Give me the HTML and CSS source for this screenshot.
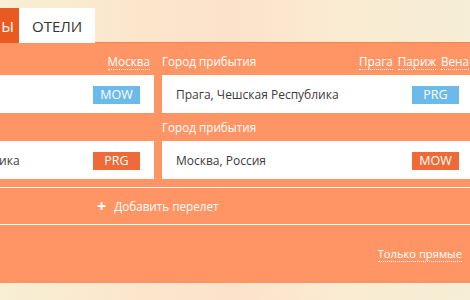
FILE: index.html
```html
<!DOCTYPE html>
<html lang="ru">

<head>
    <meta charset="UTF-8">
    <meta name="viewport" content="width=device-width, initial-scale=1.0">
    <title>Поиск билетов</title>
    <link rel="stylesheet" href="styles.css">
</head>

<body>
    <main class="page">
        <nav class="tabs">
            <a class="tab tab-active">АВИАБИЛЕТЫ</a>
            <a class="tab">ОТЕЛИ</a>
        </nav>

        <section class="panel">
            <div class="routes">
                <div class="field">
                    <div class="field-head">
                        <span class="field-label">Город вылета</span>
                        <span class="quick">
                            <a class="quick-link">Москва</a>
                        </span>
                    </div>
                    <div class="field-box">
                        <span class="field-text">Москва, Россия</span>
                        <span class="code code-blue">MOW</span>
                    </div>
                </div>
                <div class="field">
                    <div class="field-head">
                        <span class="field-label">Город прибытия</span>
                        <span class="quick">
                            <a class="quick-link">Прага</a>
                            <a class="quick-link">Париж</a>
                            <a class="quick-link">Вена</a>
                        </span>
                    </div>
                    <div class="field-box">
                        <span class="field-text">Прага, Чешская Республика</span>
                        <span class="code code-blue">PRG</span>
                    </div>
                </div>

                <div class="field">
                    <div class="field-head">
                        <span class="field-label">Город вылета</span>
                    </div>
                    <div class="field-box">
                        <span class="field-text">Прага, Чешская Республика</span>
                        <span class="code code-orange">PRG</span>
                    </div>
                </div>
                <div class="field">
                    <div class="field-head">
                        <span class="field-label">Город прибытия</span>
                    </div>
                    <div class="field-box">
                        <span class="field-text">Москва, Россия</span>
                        <span class="code code-orange">MOW</span>
                    </div>
                </div>
            </div>

            <div class="add-flight">
                <span class="plus">+</span>
                <span>Добавить перелет</span>
            </div>

            <div class="options">
                <a class="quick-link">Только прямые</a>
            </div>
        </section>
    </main>
</body>

</html>
```

FILE: styles.css
```css
* {
    box-sizing: border-box;
}

body {
    margin: 0;
    padding: 0;
    height: 300px;
    overflow: hidden;
    font-family: "Open Sans", "Liberation Sans", sans-serif;
    background: linear-gradient(90deg, #f8efd4 0%, #fbe6cc 30%, #fde2cb 50%, #f9ecd2 75%, #f6eed6 100%);
}

.page {
    width: 646px;
    margin-left: -165px;
    padding-top: 8px;
}

.tabs {
    display: flex;
    height: 35px;
}

.tab {
    display: flex;
    align-items: center;
    padding: 0 13px;
    font-size: 15px;
    color: #333;
    background-color: #fff;
}

.tab-active {
    width: 184px;
    justify-content: flex-end;
    padding-right: 2px;
    letter-spacing: 3px;
    color: #fff;
    background-color: #ea5a20;
}

.panel {
    padding: 4px 0 0;
    background-color: #ff9565;
    border-top: 1px solid #f9834f;
    margin-top: -1px;
}

.routes {
    display: grid;
    grid-template-columns: 311px 311px;
    column-gap: 8px;
    padding: 0 8px;
}

.field-head {
    display: flex;
    justify-content: space-between;
    align-items: center;
    height: 28px;
    padding-right: 4px;
    color: #fff;
    font-size: 11.7px;
}

.quick {
    display: flex;
    gap: 5px;
}

.quick-link {
    color: #fff;
    border-bottom: 1px dotted #fff;
    line-height: 15px;
    margin-top: 2px;
}

.field-box {
    display: flex;
    justify-content: space-between;
    align-items: center;
    height: 38px;
    padding: 1px 14px 0;
    background-color: #fff;
}

.field-text {
    font-size: 12px;
    color: #3b3b3b;
}

.code {
    width: 47px;
    height: 18px;
    line-height: 18px;
    text-align: center;
    font-size: 12.5px;
    color: #fff;
}

.code-blue {
    background-color: #6cbaea;
}

.code-orange {
    background-color: #ef6a38;
}

.add-flight {
    display: flex;
    align-items: center;
    gap: 8px;
    height: 38px;
    margin-top: 8px;
    padding-left: 262px;
    border-top: 1px solid #fff;
    border-bottom: 1px solid #fff;
    color: #fff;
    font-size: 11.7px;
}

.plus {
    font-size: 16px;
    font-weight: 700;
}

.options {
    display: flex;
    justify-content: flex-end;
    align-items: flex-start;
    height: 58px;
    padding: 19px 19px 0 0;
    font-size: 11.2px;
}
```
